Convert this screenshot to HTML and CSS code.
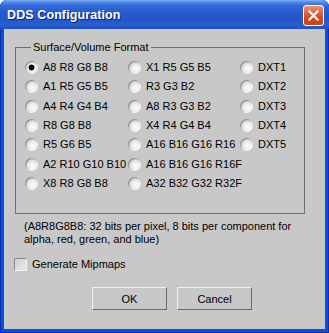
FILE: index.html
```html
<!DOCTYPE html>
<html lang="en">

<head>
    <meta charset="UTF-8">
    <meta name="viewport" content="width=device-width, initial-scale=1.0">
    <title>DDS Configuration</title>
    <link rel="stylesheet" href="styles.css">
</head>

<body>
    <div class="window">
        <div class="titlebar">
            <span class="title">DDS Configuration</span>
            <span class="close">
                <svg width="11" height="11" viewBox="0 0 11 11">
                    <path d="M1.5 1.5 L9.5 9.5 M9.5 1.5 L1.5 9.5" stroke="#fff" stroke-width="2.2" stroke-linecap="square" />
                </svg>
            </span>
        </div>
        <div class="client">
            <fieldset class="group">
                <legend>Surface/Volume Format</legend>
                <div class="formats">
                    <!-- 第一列 -->
                    <label class="radio checked"><span class="dot"></span>A8 R8 G8 B8</label>
                    <label class="radio"><span class="dot"></span>A1 R5 G5 B5</label>
                    <label class="radio"><span class="dot"></span>A4 R4 G4 B4</label>
                    <label class="radio"><span class="dot"></span>R8 G8 B8</label>
                    <label class="radio"><span class="dot"></span>R5 G6 B5</label>
                    <label class="radio"><span class="dot"></span>A2 R10 G10 B10</label>
                    <label class="radio"><span class="dot"></span>X8 R8 G8 B8</label>
                    <!-- 第二列 -->
                    <label class="radio"><span class="dot"></span>X1 R5 G5 B5</label>
                    <label class="radio"><span class="dot"></span>R3 G3 B2</label>
                    <label class="radio"><span class="dot"></span>A8 R3 G3 B2</label>
                    <label class="radio"><span class="dot"></span>X4 R4 G4 B4</label>
                    <label class="radio"><span class="dot"></span>A16 B16 G16 R16</label>
                    <label class="radio"><span class="dot"></span>A16 B16 G16 R16F</label>
                    <label class="radio"><span class="dot"></span>A32 B32 G32 R32F</label>
                    <!-- 第三列 -->
                    <label class="radio"><span class="dot"></span>DXT1</label>
                    <label class="radio"><span class="dot"></span>DXT2</label>
                    <label class="radio"><span class="dot"></span>DXT3</label>
                    <label class="radio"><span class="dot"></span>DXT4</label>
                    <label class="radio"><span class="dot"></span>DXT5</label>
                </div>
            </fieldset>
            <p class="note">(A8R8G8B8: 32 bits per pixel, 8 bits per component for<br>alpha, red, green, and blue)</p>
            <label class="check"><span class="box"></span>Generate Mipmaps</label>
            <div class="buttons">
                <button class="btn">OK</button>
                <button class="btn">Cancel</button>
            </div>
        </div>
    </div>
</body>

</html>
```

FILE: styles.css
```css
* {
    margin: 0;
    padding: 0;
    box-sizing: border-box;
}

body {
    background-color: #fff;
    font-family: "Liberation Sans", Arial, sans-serif;
    font-size: 11px;
    color: #000;
}

.window {
    width: 329px;
    height: 333px;
    display: flex;
    flex-direction: column;
    border-radius: 7px 7px 0 0;
    overflow: hidden;
    background-color: #0a4fdc;
    padding: 0 4px 4px;
    box-shadow: inset 1px 0 #0831b0, inset -1px 0 #0831b0, inset 0 -1px #0831b0;
}

/* 标题栏 */
.titlebar {
    height: 29px;
    margin: 0 -4px;
    padding: 1px 5px 0 7px;
    display: flex;
    align-items: center;
    background: linear-gradient(to bottom,
            #7fb0f0 0%,
            #4d88e6 8%,
            #2f6ad8 20%,
            #2559cc 45%,
            #2357ca 70%,
            #275fd2 85%,
            #1e4fc0 100%);
}

.title {
    color: #fff;
    font-weight: bold;
    font-size: 12.5px;
    text-shadow: 1px 1px #0b2270;
    letter-spacing: 0.1px;
}

.close {
    margin-left: auto;
    margin-top: 1px;
    width: 21px;
    height: 21px;
    border: 1px solid #fff;
    border-radius: 3px;
    display: flex;
    align-items: center;
    justify-content: center;
    background: linear-gradient(to bottom, #e99474 0%, #dc6640 35%, #cf4a1e 65%, #c4481c 100%);
}

.client {
    flex: 1;
    background-color: #c8c8c8;
    display: flex;
    flex-direction: column;
    align-items: flex-start;
}

/* 分组框 */
.group {
    margin: 12px 0 0 11px;
    width: 290px;
    border: 1px solid #6e6e6e;
    padding: 4px 0 20px 9px;
}

.group legend {
    margin-left: 6px;
    padding: 0 2px;
    line-height: 13px;
}

.formats {
    display: grid;
    grid-auto-flow: column;
    grid-template-rows: repeat(7, 19.33px);
    grid-template-columns: 103px 112px 1fr;
}

.radio {
    display: flex;
    align-items: center;
    line-height: 13px;
    white-space: nowrap;
}

.radio .dot {
    width: 13px;
    height: 13px;
    margin-right: 5px;
    border-radius: 50%;
    flex-shrink: 0;
    background: radial-gradient(circle at 60% 60%, #fdfdfd 0, #ececec 35%, #d2d2d2 65%, #b0b0b0 100%);
    box-shadow: inset 1px 1px 1px #8e8e8e, inset -1px -1px 1px #f4f4f4;
}

.radio.checked .dot {
    background: radial-gradient(circle at 50% 50%, #000 0, #000 2.6px, #f6f6f6 3.3px, #ececec 45%, #d2d2d2 70%, #b0b0b0 100%);
}

.note {
    margin: 6px 0 0 20px;
    line-height: 13px;
}

/* 复选框 */
.check {
    margin: 12px 0 0 10px;
    display: flex;
    align-items: center;
    height: 13px;
    line-height: 13px;
}

.check .box {
    width: 13px;
    height: 13px;
    margin-right: 5px;
    border-style: solid;
    border-width: 1px;
    border-color: #8a8a8a #f4f4f4 #f4f4f4 #8a8a8a;
    background: linear-gradient(135deg, #cfcfcf, #e8e8e8);
}

/* 按钮 */
.buttons {
    margin: 16px 0 0 88px;
    display: flex;
    gap: 10px;
}

.btn {
    width: 75px;
    height: 23px;
    font-family: "Liberation Sans", Arial, sans-serif;
    font-size: 11px;
    color: #000;
    background-color: #c8c8c8;
    border-style: solid;
    border-width: 1px;
    border-color: #f0f0f0 #6a6a6a #6a6a6a #f0f0f0;
}
```
